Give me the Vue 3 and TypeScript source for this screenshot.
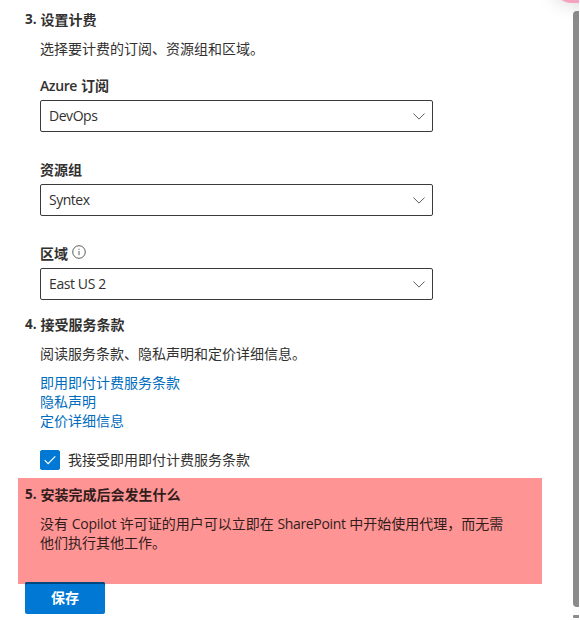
<script setup lang="ts">
import { ref } from 'vue'

interface Field {
  id: string
  prefix: string
  label: string
  value: string
  info: boolean
}

const fields: Field[] = [
  { id: 'subscription', prefix: 'Azure', label: '订阅', value: 'DevOps', info: false },
  { id: 'group', prefix: '', label: '资源组', value: 'Syntex', info: false },
  { id: 'region', prefix: '', label: '区域', value: 'East US 2', info: true },
]
const links: string[] = ['即用即付计费服务条款', '隐私声明', '定价详细信息']
const accepted = ref(true)
</script>

<template>
  <div class="page">
    <div class="corner"></div>
    <main class="panel">
      <section class="step">
        <h2><span class="num">3.</span>设置计费</h2>
        <p class="text">选择要计费的订阅、资源组和区域。</p>
        <div v-for="f in fields" :key="f.id" class="field">
          <div class="label">
            <span v-if="f.prefix" class="prefix">{{ f.prefix }}</span>
            <span>{{ f.label }}</span>
            <svg v-if="f.info" class="info" viewBox="0 0 14 14">
              <circle cx="7" cy="7" r="6.3" />
              <path d="M7 6v4.2M7 3.7v1.1" />
            </svg>
          </div>
          <div class="select" :class="f.id">
            <span>{{ f.value }}</span>
            <svg class="chevron" viewBox="0 0 12 7"><path d="M.4 .5L6 6.1L11.6 .5" /></svg>
          </div>
        </div>
      </section>

      <section class="step terms">
        <h2><span class="num">4.</span>接受服务条款</h2>
        <p class="text">阅读服务条款、隐私声明和定价详细信息。</p>
        <div class="links">
          <a v-for="l in links" :key="l">{{ l }}</a>
        </div>
        <div class="accept" @click="accepted = !accepted">
          <span class="box" :class="{ on: accepted }">
            <svg v-if="accepted" viewBox="0 0 12 10"><path d="M.7 5.2l3.4 3.4L11.3 1.3" /></svg>
          </span>
          <span class="caption">我接受即用即付计费服务条款</span>
        </div>
      </section>

      <section class="step highlight">
        <h2><span class="num">5.</span>安装完成后会发生什么</h2>
        <p class="text">没有 <span class="copilot">Copilot</span> 许可证的用户可以立即在 <span class="sharepoint">SharePoint</span> 中开始使用代理，而无需<br />他们执行其他工作。</p>
      </section>
      <button class="save">保存</button>
    </main>
    <aside class="scroll">
      <div class="thumb"></div>
      <div class="next"></div>
    </aside>
  </div>
</template>

<style>
body {
  margin: 0;
  background: #fff;
}
</style>

<style scoped>
.page {
  position: relative;
  display: flex;
  justify-content: space-between;
  width: 579px;
  height: 620px;
  overflow: hidden;
  box-sizing: border-box;
  color: #323130;
  font: 14px/19px 'Open Sans', 'Noto Sans CJK SC', sans-serif;
}
.corner {
  position: absolute;
  top: -37px;
  left: 552px;
  width: 60px;
  height: 40px;
  border-radius: 20px;
  background: #f7a1c0;
  box-shadow: 0 2px 18px rgba(0, 0, 0, 0.14);
}
.panel {
  width: 524px;
  padding: 10px 0 0 18px;
}
.step {
  padding-left: 22px;
}
h2 {
  display: flex;
  margin: 0 0 10px -15px;
  font-size: 14px;
  line-height: 19px;
  font-weight: 700;
}
.num {
  width: 15.5px;
  flex: none;
  font-size: 13.5px;
}
.text {
  margin: 0;
  white-space: nowrap;
}
.field {
  margin-top: 33px;
}
.text + .field {
  margin-top: 18px;
}
.label {
  display: flex;
  height: 19px;
  margin-bottom: 5px;
  font-weight: 700;
}
.field:not(:nth-of-type(1)) {
  margin-top: 28px;
}
.prefix {
  margin-right: 4px;
  font-weight: 600;
  letter-spacing: -0.4px;
}
.info {
  width: 14px;
  height: 14px;
  margin: 1px 0 0 4px;
}
.info circle,
.info path {
  fill: none;
  stroke: #4a4948;
  stroke-width: 0.9;
}
.select {
  display: flex;
  align-items: center;
  justify-content: space-between;
  box-sizing: border-box;
  width: 393px;
  height: 32px;
  padding: 0 7px 0 8px;
  border: 1px solid #3b3a39;
  border-radius: 2px;
}
.select span {
  padding-bottom: 2px;
}
.subscription {
  letter-spacing: -0.45px;
}
.group {
  letter-spacing: -0.5px;
}
.region {
  letter-spacing: -0.4px;
}
.chevron {
  width: 12px;
  height: 7px;
}
.chevron path {
  fill: none;
  stroke: #605e5c;
  stroke-width: 1;
}
.terms {
  margin-top: 15px;
}
.links {
  display: flex;
  flex-direction: column;
  margin-top: 10px;
  color: #006cbe;
}
.accept {
  display: flex;
  align-items: center;
  gap: 8px;
  height: 20px;
  margin-top: 20px;
}
.caption {
  padding-bottom: 2px;
}
.box {
  display: flex;
  align-items: center;
  justify-content: center;
  box-sizing: border-box;
  width: 20px;
  height: 20px;
  border: 1px solid #323130;
  border-radius: 2px;
}
.box.on {
  border-color: #0078d4;
  background: #0078d4;
}
.box svg {
  width: 12px;
  height: 10px;
}
.box path {
  fill: none;
  stroke: #fff;
  stroke-width: 1.2;
}
.highlight {
  box-sizing: border-box;
  height: 106px;
  margin-top: 8px;
  padding-top: 7px;
  background: #ff9494;
  color: #321d1c;
}
.copilot {
  letter-spacing: -0.25px;
}
.sharepoint {
  letter-spacing: -0.35px;
}
.save {
  display: block;
  width: 80px;
  height: 32px;
  margin: -2px 0 0 7px;
  padding: 0;
  border: 0;
  border-radius: 2px;
  background: #0078d4;
  box-shadow: inset 0 2px #00457b;
  color: #fff;
  font: 700 14px/32px 'Open Sans', 'Noto Sans CJK SC', sans-serif;
}
.scroll {
  display: flex;
  flex-direction: column;
  gap: 8px;
  width: 6px;
  padding-top: 11px;
  background: #fcfcfc;
}
.thumb {
  height: 596px;
  border-radius: 4px 0 0 4px;
  background: #8b8b8b;
}
.next {
  height: 3px;
  border-radius: 1px 0 0 1px;
  background: #8b8b8b;
}
</style>
